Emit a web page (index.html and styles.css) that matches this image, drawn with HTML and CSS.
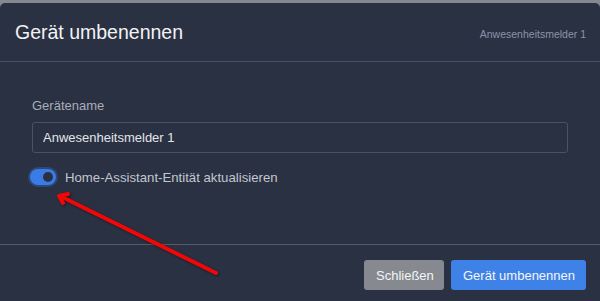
FILE: index.html
```html
<!DOCTYPE html>
<html lang="de">
<head>
    <meta charset="UTF-8">
    <title>Gerät umbenennen</title>
    <link rel="stylesheet" href="styles.css">
</head>
<body>
    <div class="dialog">
        <div class="dialog-header">
            <h1 class="title">Gerät umbenennen</h1>
            <span class="subtitle">Anwesenheitsmelder 1</span>
        </div>
        <div class="dialog-body">
            <label class="field-label" for="deviceName">Gerätename</label>
            <input id="deviceName" class="field-input" type="text" value="Anwesenheitsmelder 1">
            <div class="switch-row">
                <span class="switch"><span class="knob"></span></span>
                <span class="switch-label">Home-Assistant-Entität aktualisieren</span>
            </div>
        </div>
        <div class="dialog-footer">
            <button type="button" class="btn btn-grey">Schließen</button>
            <button type="button" class="btn btn-blue">Gerät umbenennen</button>
        </div>
        <svg class="annotation" width="600" height="301" viewBox="0 0 600 301">
            <g stroke="#f00808" stroke-width="4" stroke-linecap="round" stroke-linejoin="round" fill="none">
                <line x1="216" y1="273" x2="60" y2="196"/>
                <polyline points="68,194 59,196 63,203"/>
            </g>
        </svg>
    </div>
</body>
</html>
```

FILE: styles.css
```css
body {
    margin: 0;
    background-color: #86888f;
    font-family: "Liberation Sans", Arial, sans-serif;
}

.dialog {
    position: relative;
    margin-top: 3px;
    height: 298px;
    background-color: #2a3142;
    border-radius: 5px 5px 0 0;
}

.dialog-header {
    height: 58px;
    padding: 0 14px 0 15px;
    display: flex;
    align-items: center;
    justify-content: space-between;
    border-bottom: 1px solid #4b5164;
}

.title {
    margin: 0;
    font-size: 19.5px;
    font-weight: normal;
    color: #f2f3f5;
}

.subtitle {
    font-size: 10.5px;
    color: #8b94a8;
    margin-top: 3px;
}

.dialog-body {
    height: 183px;
    padding: 36px 32px 0 32px;
    box-sizing: border-box;
    border-bottom: 1px solid #555b6b;
}

.field-label {
    display: block;
    font-size: 13px;
    color: #a8adb8;
    margin-bottom: 10px;
}

.field-input {
    display: block;
    width: 100%;
    height: 31px;
    margin-top: -1px;
    box-sizing: border-box;
    padding: 0 10px;
    background: transparent;
    border: 1px solid #4c5263;
    border-radius: 3px;
    font-family: inherit;
    font-size: 13px;
    color: #e3e5ea;
}

.switch-row {
    display: flex;
    align-items: center;
    gap: 9px;
    margin-top: 16px;
    margin-left: -2px;
}

.switch {
    position: relative;
    width: 26px;
    height: 16px;
    border-radius: 8px;
    background-color: #3b7be6;
    box-shadow: 0 0 0 2px #2d4876;
}

.knob {
    position: absolute;
    right: 3px;
    top: 3px;
    width: 10px;
    height: 10px;
    border-radius: 50%;
    background-color: #2a3142;
}

.switch-label {
    font-size: 13.2px;
    color: #c3c7cf;
}

.dialog-footer {
    display: flex;
    justify-content: flex-end;
    gap: 7px;
    padding: 15px 14px 0 0;
}

.btn {
    height: 30px;
    padding: 0 12px;
    border: none;
    border-radius: 3px;
    font-family: inherit;
    font-size: 13px;
    color: #f4f5f7;
    white-space: nowrap;
}

.btn-grey {
    width: 80px;
    background-color: #868990;
}

.btn-blue {
    width: 135px;
    background-color: #3f82e7;
}

.annotation {
    position: absolute;
    left: 0;
    top: -3px;
    pointer-events: none;
    filter: drop-shadow(1px 1px 1px rgba(0, 0, 0, 0.5));
}
```
